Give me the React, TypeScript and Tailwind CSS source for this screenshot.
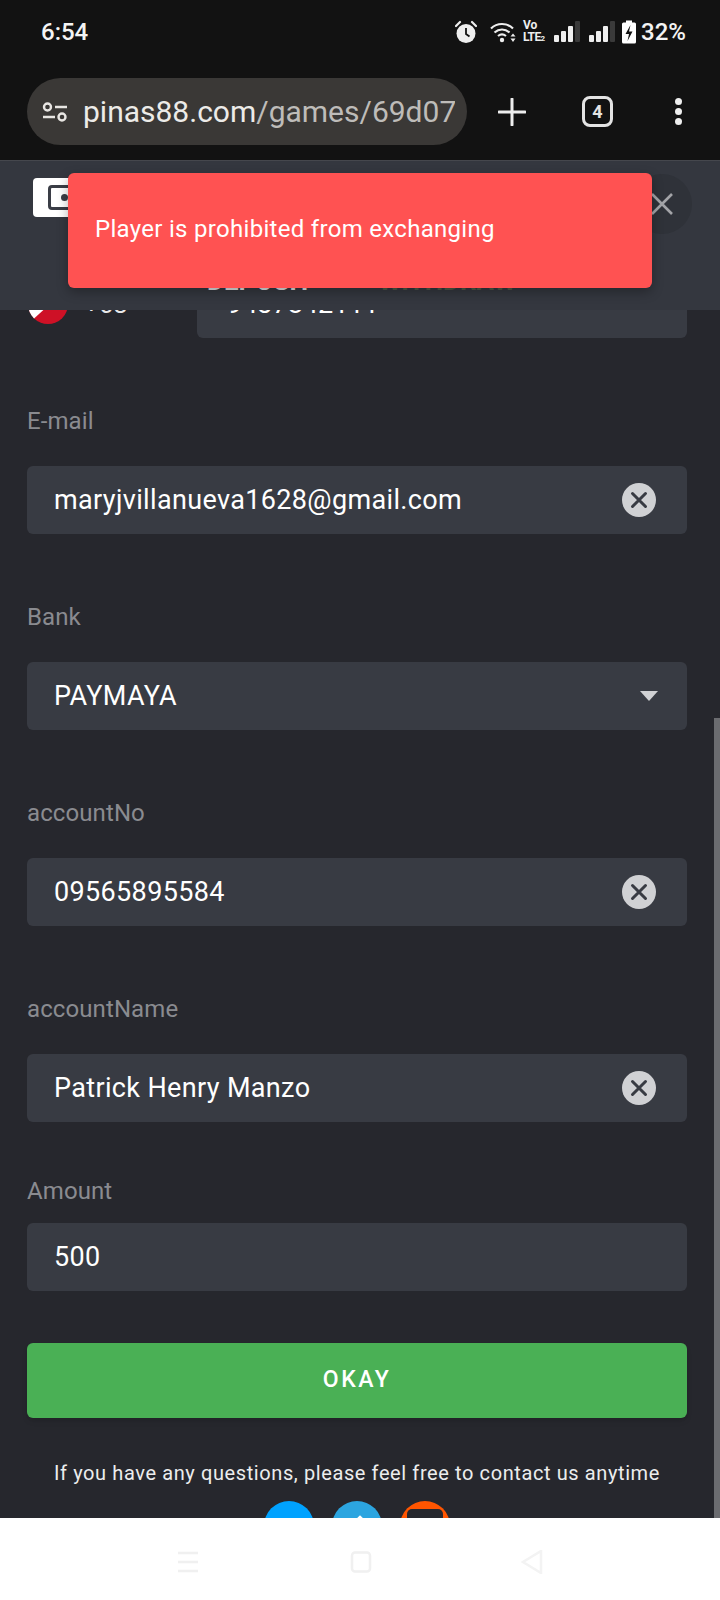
const font = { fontFamily: 'Roboto, "Liberation Sans", sans-serif' }

function ClearIcon() {
  return (
    <svg width="34" height="34" viewBox="0 0 34 34" className="shrink-0">
      <circle cx="17" cy="17" r="17" fill="#d0d1d4" />
      <path d="M10.5 10.5 23.5 23.5M23.5 10.5 10.5 23.5" stroke="#383b43" strokeWidth="3" strokeLinecap="round" />
    </svg>
  )
}

function StatusIcons() {
  return (
    <div className="flex items-center">
      <svg width="22" height="24" viewBox="0 0 22 24" className="mr-[13px]">
        <path d="M1 6 5 2M21 6 17 2" stroke="#eee" strokeWidth="2.2" strokeLinecap="round" />
        <circle cx="11" cy="13.5" r="9.5" fill="#eee" />
        <path d="M11 8v6l3.5 2.5" stroke="#121212" strokeWidth="1.8" fill="none" />
      </svg>
      <svg width="27" height="24" viewBox="0 0 27 24" className="mr-[6px]">
        <path d="M1 8.5C7 2.5 17 2.5 23 8.5M4.5 12.5C9 8.5 15 8.5 19.5 12.5M8 16C10.5 14 13.5 14 16 16" stroke="#eee" strokeWidth="2.2" fill="none" />
        <circle cx="12" cy="20" r="2.2" fill="#eee" />
        <path d="M23 13.5 25.5 16.5H20.5ZM23 22 25.5 18.5H20.5Z" fill="#eee" />
      </svg>
      <div className="mr-[8px] flex w-[23px] flex-col text-[12px] leading-[12px] font-bold text-[#eee]">
        <span>Vo</span>
        <span className="tracking-[-0.6px]">LTE<span className="text-[8px]">2</span></span>
      </div>
      <Signal />
      <div className="w-[8px]" />
      <Signal />
      <svg width="14" height="24" viewBox="0 0 14 24" className="mr-[5px] ml-[6px]">
        <rect x="4" y="0.5" width="6" height="3" fill="#fff" />
        <rect x="0" y="2.5" width="14" height="21" rx="1.5" fill="#fff" />
        <path d="M8.5 5 3.5 14H7L5.5 21 10.5 11.5H7Z" fill="#121212" />
      </svg>
      <span className="text-[24px] leading-none font-medium text-[#f4f4f4]">32%</span>
    </div>
  )
}

function Signal() {
  return (
    <svg width="27" height="24" viewBox="0 0 27 24">
      <rect x="0" y="15" width="5" height="7" rx="1" fill="#eee" />
      <rect x="7" y="11" width="5" height="11" rx="1" fill="#eee" />
      <rect x="14" y="6" width="5" height="16" rx="1" fill="#eee" />
      <rect x="21" y="1" width="5" height="21" rx="1" fill="#3a3a3a" />
    </svg>
  )
}

function BrowserBar() {
  return (
    <div className="flex h-[96px] items-start bg-[#121212] pt-[14px] pl-[27px]">
      <div className="flex h-[67px] w-[440px] items-center overflow-hidden rounded-[34px] bg-[#3a3836] pr-[12px] pl-[15px]">
        <svg width="26" height="20" viewBox="0 0 26 20" className="mr-[15px] shrink-0">
          <circle cx="5.5" cy="5" r="3.5" fill="none" stroke="#e8e6e3" strokeWidth="2.4" />
          <circle cx="20" cy="15" r="3.5" fill="none" stroke="#e8e6e3" strokeWidth="2.4" />
          <path d="M13 5H25M1 15H13" stroke="#e8e6e3" strokeWidth="2.4" />
        </svg>
        <div className="overflow-hidden text-[30px] leading-[40px] whitespace-nowrap text-[#bebcb9]">
          <span className="text-[#ecebe8]">pinas88.com</span>/games/69d07d2a
        </div>
      </div>
      <div className="flex h-[67px] flex-1 items-center">
        <svg width="28" height="28" viewBox="0 0 28 28" className="ml-[31px]">
          <path d="M14 1V27M1 14H27" stroke="#eee" strokeWidth="3" strokeLinecap="round" />
        </svg>
        <div className="ml-[56px] flex h-[31px] w-[31px] items-center justify-center rounded-[8px] border-[3px] border-[#e4e4e4] text-[18px] font-bold text-[#e4e4e4]">
          4
        </div>
        <div className="ml-[62px] flex flex-col gap-[3px]">
          <span className="size-[7px] rounded-full bg-[#eee]" />
          <span className="size-[7px] rounded-full bg-[#eee]" />
          <span className="size-[7px] rounded-full bg-[#eee]" />
        </div>
      </div>
    </div>
  )
}

function DialogHeader() {
  return (
    <div className="relative z-10 flex h-[150px] flex-col border-t border-[#45474d] bg-[#34373f] pl-[33px]">
      <div className="flex items-start">
        <div className="mt-[17px] flex h-[39px] w-[80px] items-center rounded-[4px] bg-white pl-[15px]">
          <div className="flex h-[25px] w-[32px] items-center justify-center rounded-[4px] border-[3px] border-[#3a3d46]">
            <span className="size-[7px] rounded-full bg-[#3a3d46]" />
          </div>
        </div>
        <div className="mt-[13px] mr-[28px] ml-auto flex size-[60px] items-center justify-center rounded-full bg-[#2f3239]">
          <svg width="22" height="22" viewBox="0 0 22 22">
            <path d="M1 1 21 21M21 1 1 21" stroke="#a3a4a8" strokeWidth="2.6" />
          </svg>
        </div>
      </div>
      <div className="mt-[34px] flex pl-[174px] text-[26px] leading-[26px] font-bold">
        <span className="text-[#e4e5e7]">DEPOSIT</span>
        <span className="ml-[66px] text-[#4d5a45]">WITHDRAW</span>
      </div>
    </div>
  )
}

function Field({ label, value, clear = true, arrow = false }: { label: string; value: string; clear?: boolean; arrow?: boolean }) {
  return (
    <div className="mt-[68px]">
      <div className="mb-[30px] h-[30px] text-[24px] leading-[30px] tracking-[0.1px] text-[#8a8b90]">{label}</div>
      <div className="flex h-[68px] items-center rounded-[6px] bg-[#383b43] pr-[31px] pl-[27px] text-[27px] tracking-[0.35px] text-white">
        <span>{value}</span>
        <div className="ml-auto">
          {clear && <ClearIcon />}
          {arrow && (
            <svg width="18" height="10" viewBox="0 0 18 10" className="mr-[-2px]">
              <path d="M0 0H18L9 10Z" fill="#d0d1d4" />
            </svg>
          )}
        </div>
      </div>
    </div>
  )
}

function WithdrawForm() {
  return (
    <div className="-mt-[40px] px-[27px] pr-[33px]">
      <div className="flex items-center">
        <div className="flex h-[68px] w-[170px] items-center">
          <svg width="40" height="40" viewBox="0 0 40 40" className="ml-[1px]">
            <clipPath id="flag">
              <circle cx="20" cy="20" r="20" />
            </clipPath>
            <g clipPath="url(#flag)">
              <rect width="40" height="20" fill="#0038a8" />
              <rect y="20" width="40" height="20" fill="#ce1126" />
              <path d="M0 0 22 20 0 40Z" fill="#fff" />
              <circle cx="7" cy="20" r="3.5" fill="#fcd116" />
            </g>
          </svg>
          <span className="ml-[16px] text-[26px] text-[#e8e8e8]">+63</span>
        </div>
        <div className="flex h-[68px] flex-1 items-center rounded-[6px] bg-[#383b43] pl-[30px] text-[27px] text-white">
          9437842111
        </div>
      </div>
      <Field label="E-mail" value="maryjvillanueva1628@gmail.com" />
      <Field label="Bank" value="PAYMAYA" clear={false} arrow />
      <Field label="accountNo" value="09565895584" />
      <Field label="accountName" value="Patrick Henry Manzo" />
      <div className="mt-[54px]">
        <div className="mb-[17px] h-[30px] text-[24px] leading-[30px] tracking-[0.1px] text-[#8a8b90]">Amount</div>
        <div className="flex h-[68px] items-center rounded-[6px] bg-[#383b43] pl-[27px] text-[27px] tracking-[0.35px] text-white">500</div>
      </div>
      <button
        type="button"
        className="mt-[52px] flex h-[75px] w-full items-center justify-center rounded-[6px] bg-[#4ab055] text-[23px] font-medium tracking-[2.5px] text-white shadow-md"
      >
        OKAY
      </button>
      <p className="mt-[40px] text-center text-[20px] leading-[30px] tracking-[0.6px] whitespace-nowrap text-[#eceded]">
        If you have any questions, please feel free to contact us anytime
      </p>
      <div className="mt-[13px] flex justify-center gap-[18px]">
        <span className="size-[50px] rounded-full bg-[#00a2ff]" />
        <span className="flex size-[50px] justify-center rounded-full bg-[#2ca5e0] pt-[15px] pl-[6px]">
          <span className="size-[4px] rotate-45 bg-white" />
        </span>
        <span className="flex size-[50px] justify-center rounded-full bg-[#ff5500] pt-[8px]">
          <span className="h-[30px] w-[36px] rounded-[5px] bg-[#26272d]" />
        </span>
      </div>
    </div>
  )
}

function BottomNav() {
  return (
    <div className="relative z-20 flex h-[82px] shrink-0 items-center justify-center bg-white pt-[6px]">
      <svg width="22" height="22" viewBox="0 0 22 22" className="mr-[151px]">
        <path d="M1 2H21M1 11H21M1 20H21" stroke="#f0f0f0" strokeWidth="2.5" />
      </svg>
      <svg width="22" height="22" viewBox="0 0 22 22" className="mr-[149px]">
        <rect x="2" y="1.5" width="18" height="19" rx="3" fill="none" stroke="#f0f0f0" strokeWidth="2.5" />
      </svg>
      <svg width="22" height="24" viewBox="0 0 22 24">
        <path d="M20 1 2 12 20 23Z" fill="none" stroke="#f3f3f3" strokeWidth="2.5" />
      </svg>
    </div>
  )
}

export default function App() {
  return (
    <div className="flex h-[1600px] w-[720px] flex-col overflow-hidden bg-[#26272d]" style={font}>
      <div className="flex h-[64px] shrink-0 items-center justify-between bg-[#121212] pr-[34px] pl-[41px]">
        <span className="text-[24px] font-medium text-[#f4f4f4]">6:54</span>
        <StatusIcons />
      </div>
      <BrowserBar />
      <div className="relative flex-1 overflow-hidden">
        <DialogHeader />
        <WithdrawForm />
        <div className="absolute top-[13px] left-[68px] z-20 flex h-[115px] w-[584px] items-center rounded-[6px] bg-[#ff5252] pb-[3px] pl-[27px] text-[24px] tracking-[0.3px] text-white shadow-[0_4px_12px_rgba(0,0,0,0.3)]">
          Player is prohibited from exchanging
        </div>
        <div className="absolute top-[558px] right-0 z-20 h-[800px] w-[6px] bg-[#6b6c70]" />
      </div>
      <BottomNav />
    </div>
  )
}
